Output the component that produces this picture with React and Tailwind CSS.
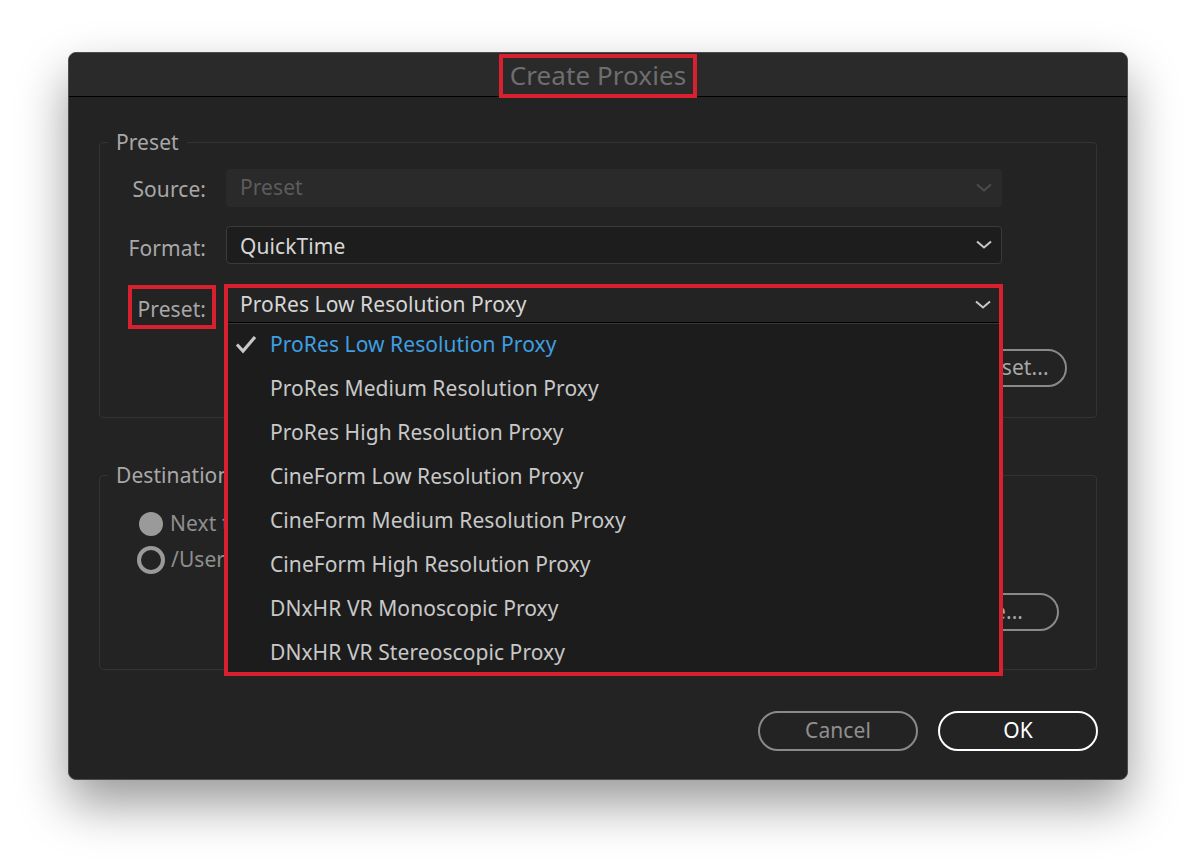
const proxies = [
  "ProRes Low Resolution Proxy",
  "ProRes Medium Resolution Proxy",
  "ProRes High Resolution Proxy",
  "CineForm Low Resolution Proxy",
  "CineForm Medium Resolution Proxy",
  "CineForm High Resolution Proxy",
  "DNxHR VR Monoscopic Proxy",
  "DNxHR VR Stereoscopic Proxy",
];

function Chevron({ color = "#c8c8c8" }) {
  return (
    <svg width="18" height="10" viewBox="0 0 18 10" fill="none" className="shrink-0">
      <path d="M2 1.5 L9 7.5 L16 1.5" stroke={color} strokeWidth="2" />
    </svg>
  );
}

function Select({ value, disabled, textClass }) {
  return (
    <div
      className={
        disabled
          ? "w-[776px] h-[38px] flex items-center justify-between pl-[14px] pr-[9px] rounded bg-[#2a2a2a] text-[#5c5c5c]"
          : "w-[776px] h-[38px] flex items-center justify-between pl-[13px] pr-[8px] rounded bg-[#1d1d1d] border border-[#3a3a3a] text-[#d6d6d6]"
      }
    >
      <span className={textClass}>{value}</span>
      <Chevron color={disabled ? "#4c4c4c" : "#c8c8c8"} />
    </div>
  );
}

function Group({ title, className, children }) {
  return (
    <div className={"relative w-[998px] border border-[#333333] rounded " + className}>
      <span className="absolute -top-[16px] left-[8px] px-2 bg-[#232323] leading-[30px] text-[#a8a8a8]">
        {title}
      </span>
      {children}
    </div>
  );
}

function Pill({ children, className }) {
  return (
    <button className={"h-10 w-40 rounded-full border-2 flex items-center justify-center " + className}>
      {children}
    </button>
  );
}

export default function App() {
  return (
    <div className="min-h-screen bg-white pt-[52px] pl-[68px] font-['Noto_Sans',sans-serif] text-[21px] tracking-[0.07px]">
      <div className="relative w-[1060px] h-[728px] rounded-lg bg-[#232323] border border-[#4d4d4d] shadow-[0_24px_50px_rgba(0,0,0,0.4)]">
        {/* Title bar */}
        <div className="h-[44px] flex justify-center items-start rounded-t-lg bg-[#2a2a2a] border-b border-black">
          <h1 className="w-[198px] h-[44px] mt-[1px] pb-[2px] border-4 border-[#d8212f] flex items-center justify-center text-[26px] font-normal text-[#6e6e6e]">
            Create Proxies
          </h1>
        </div>

        <div className="pl-[30px] pt-[45px]">
          <Group title="Preset" className="h-[276px] pt-[26px]">
            <div className="flex items-center gap-[20px]">
              <label className="w-[106px] h-[38px] leading-[40px] text-right text-[#a8a8a8]">Source:</label>
              <Select value="Preset" disabled />
            </div>
            <div className="flex items-center gap-[20px] mt-[19px]">
              <label className="w-[106px] h-[38px] leading-[44px] text-right text-[#a8a8a8]">Format:</label>
              <Select value="QuickTime" textClass="pt-[3px]" />
            </div>
            <div className="flex items-center gap-[20px] mt-[21px]">
              <label className="relative w-[106px] h-[38px] leading-[48px] text-right text-[#a8a8a8]">
                Preset:
                <span className="absolute left-[28px] -right-[10px] top-0 h-[44px] border-4 border-[#d8212f]" />
              </label>
              <Select value="ProRes Low Resolution Proxy" />
            </div>
            <div className="flex justify-end pr-[29px] mt-[26px]">
              <button className="h-[38px] w-[230px] rounded-full border-2 border-[#8a8a8a] text-[#a8a8a8]">
                Add Ingest Preset...
              </button>
            </div>
          </Group>

          <Group title="Destination" className="h-[195px] mt-[57px] pt-[33px]">
            <div className="flex items-center gap-[7px] pl-[39px] h-[30px] text-[#8f8f8f]">
              <span className="w-6 h-6 rounded-full bg-[#9a9a9a]" />
              <span className="w-[54px] overflow-hidden whitespace-nowrap">Next to Original</span>
            </div>
            <div className="flex items-center gap-[6px] pl-[37px] h-[30px] mt-[6px] text-[#8f8f8f]">
              <span className="w-7 h-7 rounded-full border-4 border-[#9a9a9a]" />
              <span className="w-[53px] overflow-hidden whitespace-nowrap">/Users/Shared</span>
            </div>
            <div className="flex justify-end pr-[37px] mt-[18px]">
              <button className="h-[38px] w-[162px] rounded-full border-2 border-[#8a8a8a] text-[#a8a8a8]">
                Browse...
              </button>
            </div>
          </Group>

          <div className="flex justify-end gap-5 w-[999px] mt-[41px]">
            <Pill className="border-[#8a8a8a] text-[#8f8f8f]">Cancel</Pill>
            <Pill className="border-white text-white">OK</Pill>
          </div>
        </div>

        {/* Open dropdown */}
        <div className="absolute left-[155px] top-[231px] w-[779px] h-[392px] border-4 border-[#d8212f] bg-[#1c1c1c] overflow-hidden">
          <div className="h-[35px] flex items-center justify-between pl-[12px] pr-[7px] bg-[#232323] border-b border-black text-[#d6d6d6]">
            <span>ProRes Low Resolution Proxy</span>
            <Chevron />
          </div>
          <div className="h-[1px] bg-[#383838]" />
          <div className="-mt-px">
            {proxies.map((name, i) => (
              <div
                key={name}
                className={
                  i === 0
                    ? "relative h-11 flex items-center pl-[42px] text-[#3f9fe0]"
                    : "relative h-11 flex items-center pl-[42px] text-[#c8c8c8]"
                }
              >
                {i === 0 && (
                  <svg width="22" height="20" viewBox="0 0 22 20" fill="none" className="absolute left-[7px] top-[11px]">
                    <path d="M2 10.5 L8 17 L20 3" stroke="#c8c8c8" strokeWidth="3.2" />
                  </svg>
                )}
                {name}
              </div>
            ))}
          </div>
        </div>
      </div>
    </div>
  );
}
